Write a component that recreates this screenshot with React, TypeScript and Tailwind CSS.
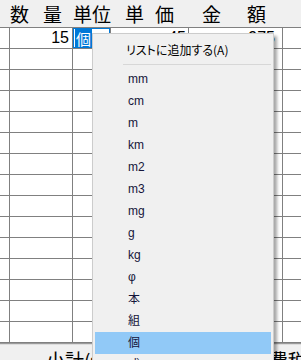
import React from "react"

const units = ["mm", "cm", "m", "km", "m2", "m3", "mg", "g", "kg", "φ", "本", "組", "個", "式"]

function GridRow({ children }: { children?: React.ReactNode[] }) {
  const c = children ?? []
  return (
    <div className="flex h-[21px] border-b border-[#808080] bg-white">
      <div className="w-[10px] border-r border-[#808080]" />
      <div className="w-[63px] border-r border-[#808080] flex items-center justify-end pr-[3px]">{c[0]}</div>
      <div className="w-[38px] border-r border-[#808080] flex">{c[1]}</div>
      <div className="w-[78px] border-r border-[#808080] flex items-center justify-end pr-[2px]">{c[2]}</div>
      <div className="w-[94px] border-r border-[#808080] flex items-center justify-end pr-[7px]">{c[3]}</div>
      <div className="flex-1" />
    </div>
  )
}

function UnitMenu() {
  return (
    <div className="absolute left-[92px] top-[33px] w-[182px] h-[340px] bg-[#f0f0f0] border border-[#cccccc] px-[2px] pt-[5px] shadow-[3px_3px_3px_rgba(0,0,0,0.35)] text-[12px]">
      <div className="h-[22px] flex items-center pl-[31px] text-black [font-family:'Noto_Sans_CJK_JP',sans-serif] [font-feature-settings:'palt']">
        リストに追加する(A)
      </div>
      <div className="h-[7px] pt-[3px] pl-[28px]">
        <div className="h-px bg-[#d7d7d7]" />
      </div>
      {units.map((u) => (
        <div
          key={u}
          className={`h-[22px] flex items-center pl-[33px] text-[#15153a] [font-family:'Liberation_Sans','Noto_Sans_CJK_JP',sans-serif] ${
            u === "個" ? "bg-[#91c9f7]" : ""
          }`}
        >
          {u}
        </div>
      ))}
    </div>
  )
}

export default function App() {
  return (
    <div className="relative w-[301px] h-[360px] overflow-hidden bg-white [font-family:'Noto_Sans_CJK_JP',sans-serif] text-black">
      {/* header */}
      <div className="flex items-center h-[28px] border-b border-[#808080] bg-[#f0f0f0] text-[19px] leading-none whitespace-nowrap">
        <span className="ml-[10px]">数</span>
        <span className="ml-[14px]">量</span>
        <span className="ml-[11px]">単位</span>
        <span className="ml-[14px]">単</span>
        <span className="ml-[11px]">価</span>
        <span className="ml-[28px]">金</span>
        <span className="ml-[26px]">額</span>
      </div>

      <GridRow>
        {[
          <span key="q" className="text-[16px] [font-family:'Liberation_Sans',sans-serif]">15</span>,
          <div key="u" className="flex-1 border border-[#0078d7] flex items-stretch pl-px">
            <span className="bg-[#0078d7] text-white text-[15px] leading-[19px] px-[1px]">個</span>
          </div>,
          <span key="p" className="text-[16px] [font-family:'Liberation_Sans',sans-serif]">45</span>,
          <span key="a" className="text-[16px] [font-family:'Liberation_Sans',sans-serif]">975</span>,
        ]}
      </GridRow>
      {Array.from({ length: 14 }).map((_, i) => (
        <GridRow key={i} />
      ))}

      {/* footer */}
      <div className="border-t border-[#9a9a9a] bg-[#f0f0f0] h-[20px] text-[19px] leading-none whitespace-nowrap">
        <div className="h-px bg-[#dcdcdc]" />
        <div className="flex pt-[5px]">
          <span className="ml-[46px]">小計(値引前)</span>
          <span className="ml-[96px]">消費税</span>
        </div>
      </div>

      <UnitMenu />
    </div>
  )
}
